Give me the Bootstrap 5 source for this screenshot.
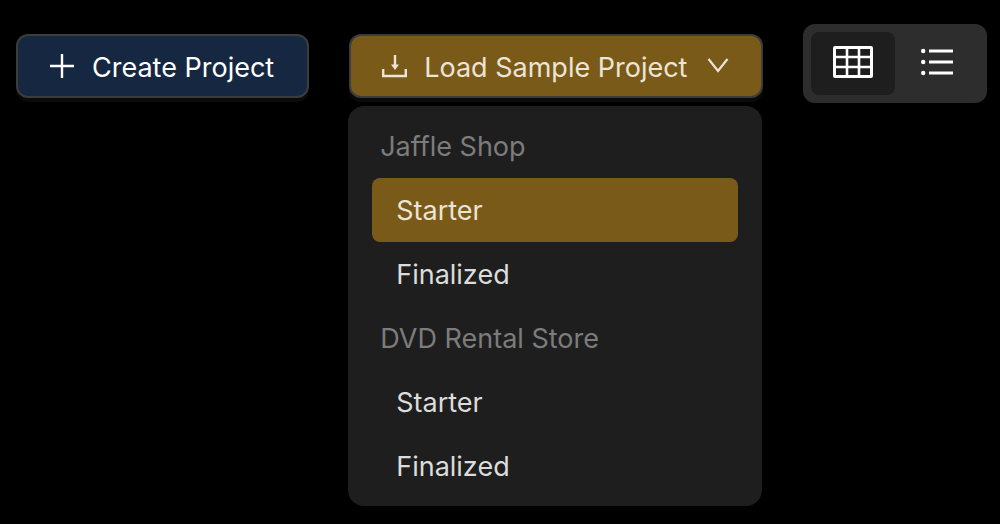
<!DOCTYPE html>
<html lang="en" data-bs-theme="dark">
<head>
<meta charset="utf-8">
<meta name="viewport" content="width=device-width, initial-scale=1">
<title>Projects</title>
<link href="https://cdn.jsdelivr.net/npm/bootstrap@5.3.0/dist/css/bootstrap.min.css" rel="stylesheet">
<style>
  body { background: #000; font-family: Inter, "Liberation Sans", sans-serif; font-size: 27px; line-height: 40px; }
  .toolbar { padding: 24px 13px 0 16px; gap: 40px; }
  .action { margin-top: 10px; }
  .btn-action { height: 64px; padding: 0 32px; font-size: 27px; line-height: 40px; border: 2px solid #3c3c3c; border-radius: 12px; box-shadow: 0 4px 0 #0a0a0a; white-space: nowrap; }
  .btn-action .btn-label { padding-top: 3px; }
  .btn-create, .btn-create:hover { background: #162742; color: #fff; border-color: #3c3c3c; padding-right: 33px; }
  .btn-load, .btn-load:hover, .btn-load.show.btn { background: #7a5a18; color: #ebe4d7; border-color: #3c3c3c; padding-left: 31px; }
  .project-menu { margin: 8px 1px 0 -1px; padding: 8px 24px; background: #1e1e1e; border-radius: 16px; }
  .project-menu .dropdown-header { padding: 13px 8px 11px; font-size: 27px; line-height: 40px; color: #7c7c7c; }
  .project-menu .dropdown-item { padding: 13px 24px 11px; line-height: 40px; color: #dcdcdc; border-radius: 8px; }
  .project-menu .dropdown-item.active { background: #7a5a18; color: #ebe4d7; }
  .view-switch { padding: 8px; background: #2d2d2d; border-radius: 12px; }
  .view-switch .btn { width: 84px; height: 63px; padding: 0 0 3px; border: 0; border-radius: 8px; color: #fff; }
  .view-switch .btn.active { background: #1e1e1e; color: #fff; }
</style>
</head>
<body>
<main class="toolbar d-flex align-items-start min-vh-100">
  <button type="button" class="action btn btn-action btn-create d-flex align-items-center gap-3">
    <svg width="26" height="26" viewBox="0 0 26 26" fill="none" stroke="currentColor" stroke-width="2.4" aria-hidden="true"><path d="M12 1v24M0 13h24"/></svg>
    <span class="btn-label">Create Project</span>
  </button>

  <div class="action flex-grow-1">
    <button type="button" id="load-sample" class="btn btn-action btn-load show w-100 d-flex align-items-center justify-content-between" data-bs-toggle="collapse" data-bs-target="#sample-menu" aria-controls="sample-menu" aria-expanded="true">
      <span class="d-flex align-items-center gap-3">
        <svg width="26" height="26" viewBox="0 0 26 26" fill="none" stroke="currentColor" stroke-width="2.4" aria-hidden="true"><path d="M1.2 16v7h22.6v-7M13 2v12"/><path d="M9 11.500h8l-4 5.500z" fill="currentColor" stroke="none"/></svg>
        <span class="btn-label">Load Sample Project</span>
      </span>
      <svg width="22" height="22" viewBox="0 0 22 22" fill="none" stroke="currentColor" stroke-width="2.2" aria-hidden="true"><path d="M1.500 4l9.500 12 9.500-12"/></svg>
    </button>
    <ul id="sample-menu" class="project-menu list-unstyled collapse show" aria-labelledby="load-sample">
      <li><h6 class="dropdown-header fw-normal">Jaffle Shop</h6></li>
      <li><a class="dropdown-item active" href="#jaffle-starter">Starter</a></li>
      <li><a class="dropdown-item" href="#jaffle-finalized">Finalized</a></li>
      <li><h6 class="dropdown-header fw-normal">DVD Rental Store</h6></li>
      <li><a class="dropdown-item" href="#dvd-starter">Starter</a></li>
      <li><a class="dropdown-item" href="#dvd-finalized">Finalized</a></li>
    </ul>
  </div>

  <div class="view-switch d-flex" role="group" aria-label="View">
    <button type="button" class="btn active d-flex align-items-center justify-content-center" aria-label="Grid view" aria-pressed="true">
      <svg width="40" height="32" viewBox="0 0 40 32" fill="none" stroke="currentColor" aria-hidden="true"><rect x="1.5" y="1.5" width="37" height="29" rx="0.5" stroke-width="3"/><path d="M14 2v28M26 2v28M2 11h36M2 21h36" stroke-width="2.6"/></svg>
    </button>
    <button type="button" class="btn d-flex align-items-center justify-content-center" aria-label="List view" aria-pressed="false">
      <svg width="32" height="28" viewBox="0 0 32 28" fill="currentColor" aria-hidden="true"><circle cx="2.2" cy="3" r="2.2"/><circle cx="2.2" cy="14" r="2.2"/><circle cx="2.2" cy="25" r="2.2"/><path d="M8 1.5h24v3H8zM8 12.5h24v3H8zM8 23.5h24v3H8z"/></svg>
    </button>
  </div>
</main>
<script src="https://cdn.jsdelivr.net/npm/bootstrap@5.3.0/dist/js/bootstrap.bundle.min.js"></script>
</body>
</html>
